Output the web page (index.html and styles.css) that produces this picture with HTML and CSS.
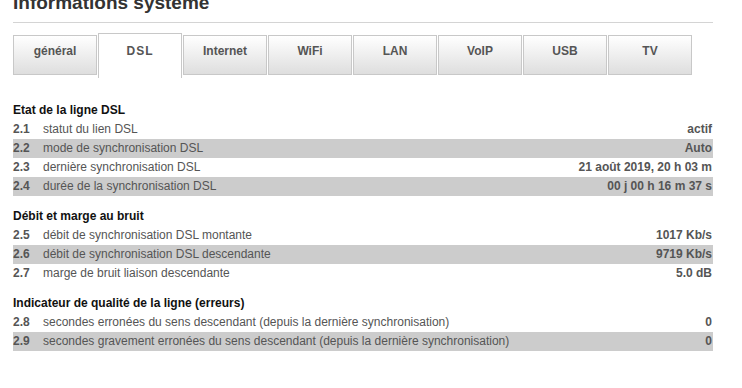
FILE: index.html
```html
<!DOCTYPE html>
<html lang="fr">
<head>
    <meta charset="UTF-8">
    <title>Informations système</title>
    <link rel="stylesheet" href="styles.css">
</head>
<body>
    <div class="page">
        <h1>Informations système</h1>

        <div class="tabs">
            <div class="tab">général</div>
            <div class="tab active">DSL</div>
            <div class="tab">Internet</div>
            <div class="tab">WiFi</div>
            <div class="tab">LAN</div>
            <div class="tab">VoIP</div>
            <div class="tab">USB</div>
            <div class="tab">TV</div>
        </div>

        <div class="section first">
            <h2>Etat de la ligne DSL</h2>
            <div class="row"><span class="num">2.1</span><span class="label">statut du lien DSL</span><span class="value">actif</span></div>
            <div class="row odd"><span class="num">2.2</span><span class="label">mode de synchronisation DSL</span><span class="value">Auto</span></div>
            <div class="row"><span class="num">2.3</span><span class="label">dernière synchronisation DSL</span><span class="value">21 août 2019, 20 h 03 m</span></div>
            <div class="row odd"><span class="num">2.4</span><span class="label">durée de la synchronisation DSL</span><span class="value">00 j 00 h 16 m 37 s</span></div>
        </div>

        <div class="section">
            <h2>Débit et marge au bruit</h2>
            <div class="row"><span class="num">2.5</span><span class="label">débit de synchronisation DSL montante</span><span class="value">1017 Kb/s</span></div>
            <div class="row odd"><span class="num">2.6</span><span class="label">débit de synchronisation DSL descendante</span><span class="value">9719 Kb/s</span></div>
            <div class="row"><span class="num">2.7</span><span class="label">marge de bruit liaison descendante</span><span class="value">5.0 dB</span></div>
        </div>

        <div class="section">
            <h2>Indicateur de qualité de la ligne (erreurs)</h2>
            <div class="row"><span class="num">2.8</span><span class="label">secondes erronées du sens descendant (depuis la dernière synchronisation)</span><span class="value">0</span></div>
            <div class="row odd"><span class="num">2.9</span><span class="label">secondes gravement erronées du sens descendant (depuis la dernière synchronisation)</span><span class="value">0</span></div>
        </div>
    </div>
</body>
</html>
```

FILE: styles.css
```css
body {
    margin: 0;
    background: #ffffff;
    font-family: 'Liberation Sans', Arial, sans-serif;
    color: #555555;
    overflow: hidden;
}

.page {
    width: 700px;
    padding: 0 29px 0 13px;
}

h1 {
    margin: -8px 0 0 0;
    padding-bottom: 8px;
    font-size: 19px;
    line-height: 22px;
    font-weight: bold;
    color: #333333;
    border-bottom: 1px solid #d4d4d4;
}

/* tab bar */
.tabs {
    display: flex;
    align-items: flex-start;
    margin-top: 10px;
}

.tab {
    box-sizing: border-box;
    width: 84px;
    height: 40px;
    margin: 2px 1px 0 0;
    padding-top: 8px;
    border: 1px solid #c8c8c8;
    background: linear-gradient(#ffffff, #dedede);
    text-align: center;
    font-size: 12px;
    line-height: 14px;
    font-weight: bold;
    color: #555555;
}

.tab.active {
    height: 45px;
    margin-top: 0;
    padding-top: 10px;
    border-bottom: none;
    background: #ffffff;
    letter-spacing: 1px;
}

/* info tables */
.section {
    margin-top: 10px;
}

.section.first {
    margin-top: 22px;
}

h2 {
    margin: 0;
    font-size: 12px;
    line-height: 20px;
    font-weight: bold;
    color: #111111;
}

.row {
    display: flex;
    height: 19px;
    line-height: 19px;
    font-size: 12px;
}

.row.odd {
    background: #cccccc;
}

.num {
    width: 30px;
    font-weight: bold;
}

.label {
    flex: 1;
}

.value {
    padding-right: 1px;
    font-weight: bold;
}
```
